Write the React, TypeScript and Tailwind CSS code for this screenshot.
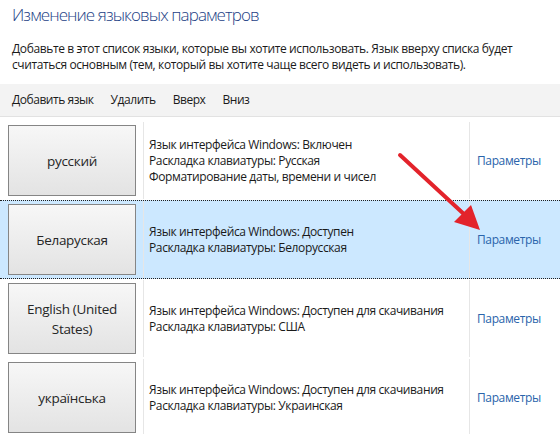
/**
 * Language preferences (Windows 8 style control panel)
 */

const langs = [
  {
    name: 'русский',
    lines: [
      'Язык интерфейса Windows: Включен',
      'Раскладка клавиатуры: Русская',
      'Форматирование даты, времени и чисел',
    ],
  },
  {
    name: 'Беларуская',
    lines: ['Язык интерфейса Windows: Доступен', 'Раскладка клавиатуры: Белорусская'],
    selected: true,
  },
  {
    name: 'English (United States)',
    lines: ['Язык интерфейса Windows: Доступен для скачивания', 'Раскладка клавиатуры: США'],
  },
  {
    name: 'українська',
    lines: ['Язык интерфейса Windows: Доступен для скачивания', 'Раскладка клавиатуры: Украинская'],
  },
];

function LangRow({ lang }: { lang: (typeof langs)[number] }) {
  return (
    <div
      className={
        lang.selected
          ? 'flex h-[79px] shrink-0 border-y border-dotted border-[#1f1f1f] bg-[#cce8ff]'
          : 'flex h-[79px] shrink-0 border-y border-transparent'
      }
    >
      <div className="flex w-[144px] shrink-0 items-center border-r border-[#e6e6e6] pl-2">
        <div className="flex h-[71px] w-[128px] items-center justify-center border border-[#858585] bg-gradient-to-b from-[#f7f7f7] to-[#e3e3e3] px-3 text-center text-[13.5px] leading-[20px] tracking-[-0.3px] text-[#262626]">
          {lang.name}
        </div>
      </div>
      <div className="flex w-[326px] shrink-0 items-center border-r border-[#e6e6e6] pl-[5px] text-[12px] leading-[16px] tracking-[-0.38px] text-[#1a1a1a]">
        <p>
          {lang.lines.map((l, i) => (
            <span key={l}>
              {i > 0 && <br />}
              {l}
            </span>
          ))}
        </p>
      </div>
      <div className="flex flex-1 items-center pl-[7px]">
        <a className="text-[12px] tracking-[-0.38px] text-[#2a64ab]">Параметры</a>
      </div>
    </div>
  );
}

export default function App() {
  return (
    <div
      className="relative flex h-[434px] w-[560px] flex-col overflow-hidden bg-white"
      style={{ fontFamily: '"Open Sans", "Noto Sans", sans-serif' }}
    >
      <h1 className="pl-[12px] pt-[3px] text-[17px] font-light leading-[24px] tracking-[-0.9px] text-[#1d3f86]">
        Изменение языковых параметров
      </h1>

      <p className="mt-[14px] pl-[12px] pr-4 text-[12px] leading-[16px] tracking-[-0.38px] text-[#1a1a1a]">
        Добавьте в этот список языки, которые вы хотите использовать. Язык вверху списка будет
        считаться основным (тем, который вы хотите чаще всего видеть и использовать).
      </p>

      {/* Toolbar */}
      <div className="mt-[11px] flex h-[33px] shrink-0 items-center gap-[17px] border-b border-[#e2e2e2] bg-[#f3f3f3] pl-[12px] text-[12px] tracking-[-0.45px] text-[#1a1a1a]">
        <span>Добавить язык</span>
        <span>Удалить</span>
        <span>Вверх</span>
        <span>Вниз</span>
      </div>

      <div className="mt-[4px] flex flex-col">
        {langs.map((l) => (
          <LangRow key={l.name} lang={l} />
        ))}
      </div>

      {/* red annotation arrow */}
      <svg className="pointer-events-none absolute left-0 top-0" width="560" height="434">
        <line x1="400" y1="155" x2="466" y2="216" stroke="#e3232b" strokeWidth="4" strokeLinecap="round" />
        <polygon points="480,230 454,222 471,205" fill="#e3232b" />
      </svg>
    </div>
  );
}
